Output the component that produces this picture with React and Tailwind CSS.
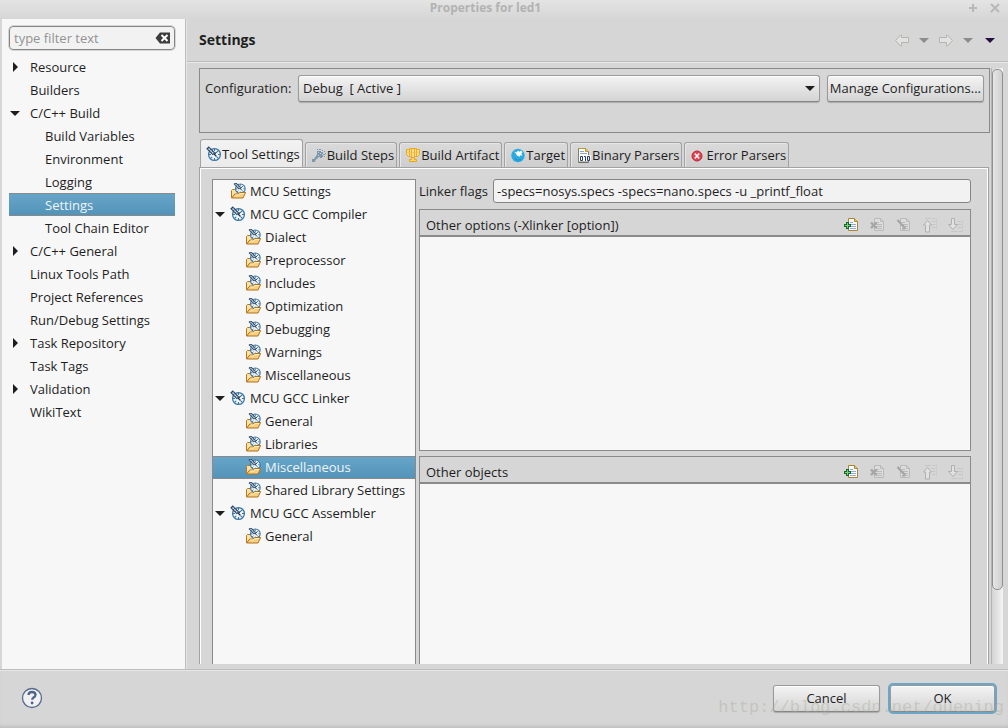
import { useState } from "react";
import { clsx } from "clsx";

const PAGES = [
  { label: "Resource", arrow: "right" },
  { label: "Builders" },
  { label: "C/C++ Build", arrow: "down" },
  { label: "Build Variables", child: true },
  { label: "Environment", child: true },
  { label: "Logging", child: true },
  { label: "Settings", child: true },
  { label: "Tool Chain Editor", child: true },
  { label: "C/C++ General", arrow: "right" },
  { label: "Linux Tools Path" },
  { label: "Project References" },
  { label: "Run/Debug Settings" },
  { label: "Task Repository", arrow: "right" },
  { label: "Task Tags" },
  { label: "Validation", arrow: "right" },
  { label: "WikiText" },
];

const TOOLS = [
  { id: "mcu", label: "MCU Settings", kind: "page" },
  { id: "compiler", label: "MCU GCC Compiler", kind: "tool" },
  { id: "c-dialect", label: "Dialect", kind: "option" },
  { id: "c-pre", label: "Preprocessor", kind: "option" },
  { id: "c-inc", label: "Includes", kind: "option" },
  { id: "c-opt", label: "Optimization", kind: "option" },
  { id: "c-debug", label: "Debugging", kind: "option" },
  { id: "c-warn", label: "Warnings", kind: "option" },
  { id: "c-misc", label: "Miscellaneous", kind: "option" },
  { id: "linker", label: "MCU GCC Linker", kind: "tool" },
  { id: "l-general", label: "General", kind: "option" },
  { id: "l-libs", label: "Libraries", kind: "option" },
  { id: "l-misc", label: "Miscellaneous", kind: "option" },
  { id: "l-shared", label: "Shared Library Settings", kind: "option" },
  { id: "assembler", label: "MCU GCC Assembler", kind: "tool" },
  { id: "a-general", label: "General", kind: "option" },
];

const TABS = [
  { label: "Tool Settings", icon: ToolIcon },
  { label: "Build Steps", icon: StepsIcon },
  { label: "Build Artifact", icon: TrophyIcon },
  { label: "Target", icon: TargetIcon },
  { label: "Binary Parsers", icon: BinaryIcon },
  { label: "Error Parsers", icon: ErrorIcon },
];

const SELECTED =
  "border-y border-[#8a8a8a] bg-linear-to-b from-[#67a5c8] to-[#5294b8] text-[#f0f4f6]";
const RAISED =
  "rounded-[3px] border border-[#9a9a9a] border-b-[#858585] bg-linear-to-b from-[#f4f4f4] to-[#d4d4d4] shadow-[inset_0_1px_0_#ffffff,0_1px_1px_rgba(0,0,0,0.2)]";

/* ---------- icons ---------- */

function Dial() {
  return (
    <>
      <circle cx="8.5" cy="8.5" r="5.9" fill="#eef5f9" stroke="#3c76a6" strokeWidth="1.3" />
      <path
        d="M8.5 3v2M8.5 12v2M12 8.5h2M3 8.5h2M12.4 4.600l-1.600 1.600M4.600 12.400l1.600-1.600M10.800 10.800l1.600 1.600"
        stroke="#3c76a6"
        strokeWidth="1.100"
        fill="none"
      />
      <path d="M1.500 1.500l6.500 6.500" stroke="#2d4a66" strokeWidth="3.600" />
      <path d="M2.500 2.500l5.300 5.300" stroke="#dfe8ee" strokeWidth="1.300" strokeDasharray="2 0.600" />
      <path d="M7.500 7.500l3 3M10.500 6l-2 2.500" stroke="#20364d" strokeWidth="1.200" />
    </>
  );
}

function ToolIcon() {
  return (
    <svg viewBox="0 0 16 16" className="size-4 shrink-0" aria-hidden="true">
      <Dial />
    </svg>
  );
}

function FolderIcon() {
  return (
    <svg viewBox="0 0 16 16" className="size-4 shrink-0" aria-hidden="true">
      <path d="M1.500 14.500v-7l1-1h3l1 1.500h6v6.500z" fill="#fbe3a8" stroke="#b9771c" />
      <g transform="translate(3.400 -1.200) scale(0.820)">
        <Dial />
      </g>
      <path d="M1.600 15l3.200-4h3.400l1.400-1.500h6L13 15z" fill="#f8cf7e" stroke="#b0701a" strokeLinejoin="round" />
      <path d="M5.300 12h3.300l1.300-1.500h4.300" stroke="#fff0c6" fill="none" />
    </svg>
  );
}

function StepsIcon() {
  return (
    <svg viewBox="0 0 16 16" className="size-4 shrink-0" aria-hidden="true">
      <g fill="#7f97ab">
        <path d="M6 4h4v1h2v2h-1v1h1v2h-1v1H9v-1H8L4.500 13 4 15H1v-3h2l3-4.500z" />
        <path d="M6 2h1v1H6zM8 2h2v1H8zM11 3h1v1h-1zM13 4h1v1h-1zM12 7h2v1h-2zM14 6h1v1h-1zM13 9h1v1h-1z" />
      </g>
      <path d="M7 5.500h1M9 6.500h1M7 8.500h1" stroke="#c9d3da" />
    </svg>
  );
}

function TrophyIcon() {
  return (
    <svg viewBox="0 0 16 16" className="size-4 shrink-0" aria-hidden="true">
      <path d="M4.500 1.500h7l1 1h2v5l-2 2h-2l-1 1h-3l-1-1h-2l-2-2v-5h2z" fill="#fadf93" stroke="#eda41d" />
      <path d="M4.500 2v7M6.500 2v8M9.500 2v8M11.500 2v7" stroke="#f0ab2a" />
      <path d="M1.500 5.500h13" stroke="#f6c04a" opacity="0.600" />
      <path d="M6.500 10.500h3v2h2v2h-7v-2h2z" fill="#fbd56d" stroke="#eda41d" />
    </svg>
  );
}

function TargetIcon() {
  return (
    <svg viewBox="0 0 16 16" className="size-4 shrink-0" aria-hidden="true">
      <circle cx="8" cy="8.500" r="6.700" fill="#29abe2" />
      <path
        d="M4 4.500l2.500 1L8 3.500l1.200 1.300 2-1.300 1.300 2-1.200 1 1 2.200-2-.4-.8 1.600-1.400-1.400-1 .8-.8-2.300z"
        fill="#ffffff"
      />
      <path d="M4.500 11.500q3 3 6.500 1" stroke="#1d8fc5" fill="none" />
    </svg>
  );
}

function BinaryIcon() {
  return (
    <svg viewBox="0 0 16 16" className="size-4 shrink-0" aria-hidden="true">
      <path d="M2.500 15V1.500h7l3 3V15z" fill="#fdfdf8" stroke="#80806a" />
      <path d="M2.500 1.500h7l3 3" fill="none" stroke="#b8963a" />
      <path d="M9.500 1.500v3h3" fill="#e8c56a" stroke="#b8963a" />
      <path d="M4 4.500h4M4 6.500h7" stroke="#8ba4cc" />
      <path d="M3 8h12v6H3z" fill="#ffffff" opacity="0.800" />
      <path d="M4.500 9.500h2v4h-2zM11.500 9.500h2v4h-2zM8 9.500h1.500v4.500" fill="none" stroke="#25416f" />
      <path d="M2.500 15.500h10" stroke="#6b6b6b" />
    </svg>
  );
}

function ErrorIcon() {
  return (
    <svg viewBox="0 0 16 16" className="size-4 shrink-0" aria-hidden="true">
      <circle cx="7" cy="9" r="5" fill="#e0414f" stroke="#c4243a" />
      <path d="M4.800 6.500l4.400 5M9.200 6.500l-4.400 5" stroke="#ffffff" strokeWidth="1.500" />
    </svg>
  );
}

function Page() {
  return (
    <>
      <path d="M4.500 2.500h6l3 3v9h-9z" fill="#fbfcff" stroke="#a8862e" />
      <path d="M10.500 2.500v3h3" fill="#efc869" stroke="#a8862e" />
      <path d="M6 6.500h3M6 8.500h6M6 10.500h6M6 12.500h6" stroke="#93a9d8" />
    </>
  );
}

const GREY_PAGE = (
  <>
    <path d="M4.500 2.500h6l3 3v9h-9z" fill="#dcdcdc" stroke="#bababa" />
    <path d="M10.500 2.500v3h3M6 6.500h3M6 8.500h6M6 10.500h6M6 12.500h6" stroke="#bababa" fill="none" />
  </>
);

const ACTIONS = [
  {
    name: "Add",
    art: (
      <>
        <Page />
        <path d="M2 6h3v2h2v3H5v2H2v-2H0V8h2z" fill="#14692f" />
        <path d="M3 7h1v2h2v1H4v2H3v-2H1V9h2z" fill="#7fd06d" />
      </>
    ),
  },
  {
    name: "Delete",
    art: (
      <>
        {GREY_PAGE}
        <path d="M1 6.500l5.500 5.500M6.500 6.500L1 12" stroke="#a5a5a5" strokeWidth="2.400" />
      </>
    ),
  },
  {
    name: "Edit",
    art: (
      <>
        {GREY_PAGE}
        <path d="M1.500 4l7 7.500" stroke="#a5a5a5" strokeWidth="2.200" />
        <path d="M6 13h3v-3" stroke="#a0a0a0" fill="none" />
      </>
    ),
  },
  {
    name: "Move Up",
    art: (
      <>
        <path d="M3 2.500h6M10.500 2.500h3M9.500 5.500h4M9.500 8.500h4M9.500 11.500h4" stroke="#c6c6c6" fill="none" />
        <path d="M14.500 2v12" stroke="#cccccc" />
        <path d="M5.500 4.500l4 4.500h-2v7h-4V9h-2z" fill="#e2e2e2" stroke="#b0b0b0" />
      </>
    ),
  },
  {
    name: "Move Down",
    art: (
      <>
        <path d="M9.500 5.500h4M9.500 8.500h4M10 11.500h4M3 15.500h6M10.500 15.500h3" stroke="#c6c6c6" fill="none" />
        <path d="M14.500 4v12" stroke="#cccccc" />
        <path d="M3.500 2.500h3v6h3l-4.500 5-4.500-5h3z" fill="#e2e2e2" stroke="#b0b0b0" />
      </>
    ),
  },
];

function Triangle({ dir = "down", className = "fill-[#1e1e1e]" }) {
  return (
    <svg viewBox="0 0 12 12" className={clsx("size-3 shrink-0", className)} aria-hidden="true">
      <path d={dir === "right" ? "M4 1l5 5-5 5z" : "M1 4h10l-5 5z"} />
    </svg>
  );
}

function NavArrow({ back }) {
  return (
    <svg viewBox="0 0 16 16" className="h-4 w-4" aria-hidden="true">
      <path
        d={
          back
            ? "M1.500 8.500l5-5.500h1v2.500h7v5h-7v3.500h-1z"
            : "M14.500 8.500l-5-5.500h-1v2.500h-7v5h7v3.500h1z"
        }
        fill="#e2e2e0"
        stroke="#b4b4b0"
        strokeLinejoin="round"
      />
    </svg>
  );
}

/* ---------- panels ---------- */

function PageTree() {
  const [active, setActive] = useState("Settings");
  return (
    <aside className="flex w-46 shrink-0 flex-col border-r border-[#bdbdbd] bg-[#f7f7f7] pt-[7px] pr-2.5 pl-[7px]">
      <div className="relative">
        <input
          type="text"
          aria-label="Filter pages"
          placeholder="type filter text"
          className="block h-6 w-full rounded-[4px] border border-[#858585] bg-[#f2f2f2] pr-6 pl-1 outline-1 outline-[#d6d6d6] placeholder:text-[#939393]"
        />
        <button type="button" aria-label="Clear" className="absolute top-1 right-1">
          <svg viewBox="0 0 16 16" className="size-4" aria-hidden="true">
            <path d="M.500 8l4.500-5.500h10v11H5z" fill="#3c3c3c" />
            <path d="M6.500 5l6 6M12.500 5l-6 6" stroke="#ffffff" strokeWidth="2" />
          </svg>
        </button>
      </div>
      <ul className="mt-[5px]">
        {PAGES.map((page) => (
          <li key={page.label}>
            <button
              type="button"
              onClick={() => setActive(page.label)}
              className={clsx(
                "flex h-[23px] w-full items-center text-left whitespace-nowrap",
                active === page.label && SELECTED,
              )}
            >
              <span className={clsx("flex shrink-0", page.child ? "w-9" : "w-[21px]")}>
                {page.arrow && <Triangle dir={page.arrow} />}
              </span>
              {page.label}
            </button>
          </li>
        ))}
      </ul>
    </aside>
  );
}

function ToolTree() {
  const [active, setActive] = useState("l-misc");
  return (
    <ul className="w-51 shrink-0 border-x border-t border-[#8a8a8a] bg-[#f7f7f7]">
      {TOOLS.map(({ id, label, kind }) => (
        <li key={id}>
          <button
            type="button"
            onClick={() => setActive(id)}
            className={clsx(
              "flex h-[23px] w-full items-center gap-1 pb-0.5 text-left whitespace-nowrap",
              kind === "option" ? "pl-8" : kind === "page" ? "pl-[17px]" : "pl-px",
              active === id && SELECTED,
            )}
          >
            {kind === "tool" && <Triangle />}
            {kind === "tool" ? <ToolIcon /> : <FolderIcon />}
            {label}
          </button>
        </li>
      ))}
    </ul>
  );
}

function ListPanel({ title }) {
  return (
    <section className="border border-[#8a8a8a] bg-[#f7f7f7]">
      <header className="flex h-[27px] items-center justify-between border-b-2 border-[#8a8a8a] bg-[#d6d6d6] px-1.5">
        <h2 className="pt-1">{title}</h2>
        <div className="flex gap-2.5 pt-1">
          {ACTIONS.map((action) => (
            <button key={action.name} type="button" aria-label={action.name} disabled={action.name !== "Add"}>
              <svg viewBox="0 0 16 17" className="h-[17px] w-4" aria-hidden="true">
                {action.art}
              </svg>
            </button>
          ))}
        </div>
      </header>
      <div className="h-[213px]" />
    </section>
  );
}

function TabBar() {
  const [active, setActive] = useState("Tool Settings");
  return (
    <div role="tablist" className="flex items-end gap-0.5 pl-px">
      {TABS.map(({ label, icon: Icon }) => (
        <button
          key={label}
          type="button"
          role="tab"
          aria-selected={active === label}
          onClick={() => setActive(label)}
          className={clsx(
            "flex items-center rounded-t-[3px] border border-b-0 border-[#a2a2a2] pr-0.5 pl-[5px] whitespace-nowrap",
            active === label
              ? "h-7 bg-linear-to-b from-[#f2f2f2] to-[#ebebeb]"
              : "h-[25px] bg-linear-to-b from-[#dadada] to-[#cecece] shadow-[inset_1px_1px_0_#e6e6e6]",
          )}
        >
          <Icon />
          {label}
        </button>
      ))}
    </div>
  );
}

function SettingsPage() {
  const [flags, setFlags] = useState("-specs=nosys.specs -specs=nano.specs -u _printf_float");
  return (
    <div className="min-w-0 flex-1 overflow-hidden">
      <div className="flex h-[65px] items-start gap-[7px] border border-[#8a8a8a] px-[5px] py-1.5">
        <label htmlFor="configuration" className="w-[86px] leading-[26px]">
          Configuration:
        </label>
        <div className="relative flex-1">
          <select id="configuration" className={clsx("h-[27px] w-full appearance-none px-1 pb-0.5", RAISED)}>
            <option>{"Debug\u00a0\u00a0[ Active ]"}</option>
          </select>
          <span className="pointer-events-none absolute top-[7px] right-1">
            <Triangle />
          </span>
        </div>
        <button type="button" className={clsx("h-[27px] px-0.5 pb-0.5 whitespace-nowrap", RAISED)}>
          Manage Configurations...
        </button>
      </div>

      <div className="mt-1.5 pr-px">
        <TabBar />
        <div className="flex items-stretch gap-[3px] border-x border-t border-[#a2a2a2] pt-[11px] pr-[17px] pl-3 shadow-[inset_1px_1px_0_#ffffff,inset_-1px_0_0_#ffffff]">
          <ToolTree />
          <div className="h-[520px] min-w-0 flex-1">
            <div className="mb-1.5 flex items-center gap-2">
              <label htmlFor="linker-flags" className="w-[66px] whitespace-nowrap">
                Linker flags
              </label>
              <input
                id="linker-flags"
                type="text"
                value={flags}
                onChange={(e) => setFlags(e.target.value)}
                className="h-6 min-w-0 flex-1 rounded-[3px] border border-[#858585] bg-[#f2f2f2] px-[3px]"
              />
            </div>
            <div className="flex flex-col gap-[5px]">
              <ListPanel title="Other options (-Xlinker [option])" />
              <ListPanel title="Other objects" />
            </div>
          </div>
        </div>
      </div>
    </div>
  );
}

export default function App() {
  return (
    <div className="relative flex h-screen flex-col overflow-hidden bg-[#d6d6d6] font-['Open_Sans','Noto_Sans',sans-serif] text-[13px] leading-[18px] text-[#1e1e1e]">
      <div className="flex h-[19px] shrink-0 items-center bg-linear-to-b from-[#e4e4e4] to-[#d6d6d6] pr-[7px] pb-1 text-xs font-bold text-[#b2b2b2]">
        <h1 className="flex-1 pl-1 text-center">Properties for led1</h1>
        <div className="flex gap-2.5">
          <button type="button" aria-label="Maximize">
            <svg viewBox="0 0 12 12" className="size-3" aria-hidden="true">
              <path d="M6 2v8M2 6h8" stroke="#b8b8b8" strokeWidth="2" />
            </svg>
          </button>
          <button type="button" aria-label="Close">
            <svg viewBox="0 0 12 12" className="size-3" aria-hidden="true">
              <path d="M2 2l8 8M10 2l-8 8" stroke="#b8b8b8" strokeWidth="2" />
            </svg>
          </button>
        </div>
      </div>

      <div className="flex min-h-0 flex-1 pl-0.5">
        <PageTree />
        <main className="flex min-w-0 flex-1 flex-col border-l border-[#e4e4e4]">
          <header className="flex h-[43px] shrink-0 items-center justify-between border-b border-[#bdbdbd] px-3 shadow-[0_1px_0_#e8e8e8]">
            <h2 className="text-sm font-bold">Settings</h2>
            <div className="flex items-center gap-2">
              <button type="button" aria-label="Back">
                <NavArrow back />
              </button>
              <button type="button" aria-label="Back history">
                <Triangle className="fill-[#8c8c8c]" />
              </button>
              <button type="button" aria-label="Forward">
                <NavArrow />
              </button>
              <button type="button" aria-label="Forward history">
                <Triangle className="fill-[#8c8c8c]" />
              </button>
              <button type="button" aria-label="View menu" className="pl-0.5">
                <Triangle className="fill-[#24103f]" />
              </button>
            </div>
          </header>
          <div className="mt-1.5 mr-[5px] mb-[5px] flex min-h-0 flex-1 gap-px pl-3">
            <SettingsPage />
            <div className="w-3 shrink-0 border-l border-[#b4b4b4] bg-linear-to-r from-[#d4d4d4] to-[#f4f4f4] pt-px">
              <div className="h-7/8 w-[11px] rounded-[5px] border border-[#909090] bg-linear-to-r from-[#e6e6e6] to-[#cfcfcf]" />
            </div>
          </div>
        </main>
      </div>

      <footer className="flex h-[59px] shrink-0 items-center justify-between border-t border-[#bdbdbd] pr-[13px] pb-0.5 pl-[21px] shadow-[inset_0_1px_0_#e6e6e6,inset_0_-4px_4px_-3px_#b4b4b4]">
        <button type="button" aria-label="Help">
          <svg viewBox="0 0 22 22" className="size-[22px]" aria-hidden="true">
            <circle cx="11" cy="11" r="9.500" fill="#f1f1f1" stroke="#566b8f" strokeWidth="1.300" />
            <path
              d="M7.500 8q.2-3 3.500-3t3.500 2.700q0 1.600-1.900 2.800-1.400.9-1.400 2.300"
              fill="none"
              stroke="#4f648a"
              strokeWidth="2.300"
            />
            <circle cx="11.100" cy="16" r="1.400" fill="#4f648a" />
          </svg>
        </button>
        <div className="flex gap-2.5">
          <button type="button" className={clsx("h-[27px] w-[107px]", RAISED)}>
            Cancel
          </button>
          <button type="button" className={clsx("h-[27px] w-[105px] outline-2 outline-[#6ba6c9]", RAISED)}>
            OK
          </button>
        </div>
      </footer>

      <p className="pointer-events-none absolute right-1 bottom-2 font-['Liberation_Mono',monospace] text-[17px] leading-6 text-[#a8a898]/40">
        http://blog.csdn.net/ouening
      </p>
    </div>
  );
}
